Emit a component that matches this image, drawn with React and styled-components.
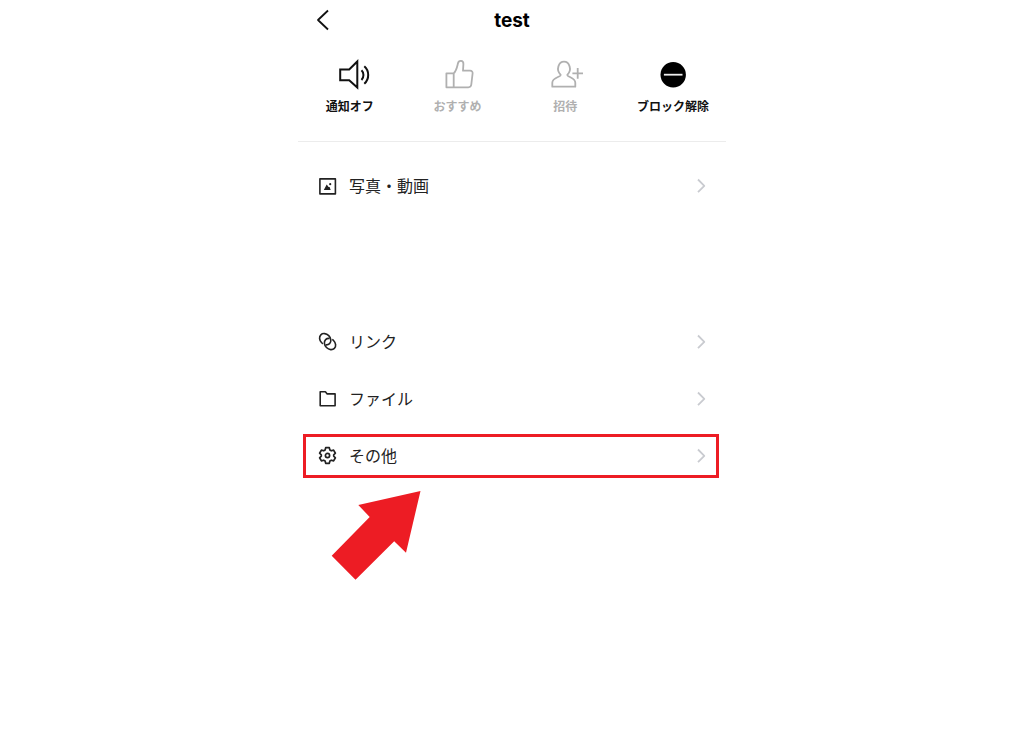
import React from 'react';
import styled, { createGlobalStyle } from 'styled-components';

const GlobalStyle = createGlobalStyle`
  * { box-sizing: border-box; }
  body {
    margin: 0;
    background: #fff;
    color: #111;
    font-family: Inter, "Noto Sans CJK JP", sans-serif;
  }
`;

const Screen = styled.main`
  max-width: 428px;
  margin: 0 auto;
`;

const Header = styled.header`
  display: grid;
  grid-template-columns: 48px 1fr 48px;
  align-items: center;
  height: 40px;
  padding-top: 2px;
`;

const IconButton = styled.button`
  display: flex;
  justify-content: center;
  padding: 0;
  border: 0;
  background: none;
  color: inherit;
  cursor: pointer;
`;

const Title = styled.h1`
  margin: 0;
  text-align: center;
  font-size: 19px;
  line-height: 24px;
  font-weight: 700;
  color: #000;
`;

const Actions = styled.nav`
  display: grid;
  grid-template-columns: repeat(4, 1fr);
  margin: 0 -1px 0 -2px;
  padding: 16px 0 24px;
`;

const Action = styled.button`
  display: flex;
  flex-direction: column;
  align-items: center;
  gap: 5px;
  padding: 0;
  border: 0;
  background: none;
  font-family: inherit;
  font-size: 12px;
  line-height: 20px;
  font-weight: 700;
  white-space: nowrap;
  color: ${(p) => (p.disabled ? '#b0b0b0' : '#111')};
`;

const Divider = styled.hr`
  height: 1px;
  margin: 0;
  border: 0;
  background: #ececec;
`;

const Menu = styled.ul`
  display: flex;
  flex-direction: column;
  gap: 13px;
  margin: 0;
  padding: ${(p) => (p.$spaced ? '112px' : '22px')} 7px 0 5px;
  list-style: none;
`;

const Row = styled.a`
  display: flex;
  align-items: center;
  gap: 11px;
  height: 44px;
  padding: 0 9px 0 12px;
  border: 3px solid ${(p) => (p.$highlighted ? '#ed1c24' : 'transparent')};
  color: #222;
  font-size: 16px;
  line-height: 24px;
  text-decoration: none;
`;

const RowLabel = styled.span`
  flex: 1;
`;

const Line = styled.svg`
  display: block;
  flex: none;
  fill: none;
  stroke: ${(p) => p.$color || 'currentColor'};
  stroke-width: ${(p) => p.$weight || 1.8};
  stroke-linejoin: round;
`;

const Pointer = styled.svg`
  display: block;
  margin: 12px 0 0 33px;
  fill: #ed1c24;
`;

const BackIcon = () => (
  <Line width="24" height="24" viewBox="0 1 24 24">
    <path d="M18 2.5 8 12l10 9.5" />
  </Line>
);

const SpeakerIcon = () => (
  <Line width="40" height="36" viewBox="0 0 40 36" $weight={2}>
    <path d="M10.2 13.5h9l8.1-8v26l-8.1-7.3h-9z" strokeLinejoin="miter" />
    <path d="M31.5 14.2c2.6 2.5 2.6 7.2 0 9.8M34.3 10.3c5.2 4.5 5.2 13 0 17.5" />
  </Line>
);

const ThumbIcon = () => (
  <Line width="40" height="36" viewBox="0 0 40 36">
    <path d="M8.4 17.3h7.3v14H8.4zM15.7 17.3c2.8-2.7 3.3-6 4.2-9.8.9-3.8 5.6-3.3 5.5.4L25 14.7h7.1c1.8 0 2.7 1.2 2.5 2.8l-1.3 11c-.2 1.8-1.2 2.8-3 2.8H15.7z" />
  </Line>
);

const InviteIcon = () => (
  <Line width="40" height="36" viewBox="-1 0 40 36">
    <path d="M14.7 18.8c-5.2-5-2-13.1 3.3-13.1s8.5 8.1 3.3 13.1c-.5 2.3 8 2.5 8 8v3.9h-23v-3.9c0-5.5 8.9-5.7 8.4-8z" />
    <path d="M31.7 12v10.7M26.4 17.3H37" />
  </Line>
);

const BlockIcon = () => (
  <Line width="40" height="36" viewBox="0 0 40 36">
    <circle cx="20.2" cy="18.7" r="12.7" fill="#000" stroke="none" />
    <path d="M10.9 18.7h18.6" stroke="#eee" />
  </Line>
);

const PhotoIcon = () => (
  <Line width="20" height="20" viewBox="0 0 20 20" $weight={1.6}>
    <rect x="1.9" y="2.9" width="15.5" height="15" />
    <path d="m5.8 13.9 2.9-5.3 1.9 2.3 1 .2 1.1 2.8z" fill="currentColor" stroke="none" />
    <circle cx="12.2" cy="8.2" r="1.1" fill="currentColor" stroke="none" />
  </Line>
);

const LinkIcon = () => (
  <Line width="20" height="20" viewBox="0 1 20 20" $weight={1.6}>
    <ellipse rx="6.2" ry="5" pathLength="100" strokeDasharray="12.2 8 79.8 0" transform="translate(7.2 8.2) rotate(45)" />
    <ellipse rx="6.2" ry="5" pathLength="100" strokeDasharray="62.2 8 29.8 0" transform="translate(12 13) rotate(45)" />
  </Line>
);

const FolderIcon = () => (
  <Line width="20" height="20" viewBox="0 1 20 20" $weight={1.6}>
    <path d="M2.2 3.8h5.2l1.8 2.1h7.9v11.8H2.2z" />
  </Line>
);

const GearIcon = () => (
  <Line width="20" height="20" viewBox="0 1 20 20" $weight={1.7}>
    <path d="M7.700 2.700h3.600l.6 2.300 1.400.8 2.300-.7 1.800 3.100-1.700 1.600v1.400l1.700 1.600-1.800 3.100-2.300-.7-1.400.8-.6 2.300H7.700L7.100 16l-1.400-.8-2.300.7-1.800-3.100 1.700-1.600V9.800L1.600 8.200l1.800-3.100 2.300.7L7.100 5z" />
    <circle cx="9.5" cy="10.5" r="2.1" />
  </Line>
);

const Chevron = () => (
  <Line width="12" height="16" viewBox="0 0 12 16" $color="#c9cbd0">
    <path d="m3 1.500 6.300 6.300L3 14.100" />
  </Line>
);

const actions = [
  { label: '通知オフ', Icon: SpeakerIcon },
  { label: 'おすすめ', Icon: ThumbIcon, disabled: true },
  { label: '招待', Icon: InviteIcon, disabled: true },
  { label: 'ブロック解除', Icon: BlockIcon },
];

const MenuItem = ({ label, Icon, highlighted }) => (
  <li>
    <Row href="#" $highlighted={highlighted}>
      <Icon />
      <RowLabel>{label}</RowLabel>
      <Chevron />
    </Row>
  </li>
);

export default function App() {
  return (
    <>
      <GlobalStyle />
      <Screen lang="ja">
        <Header>
          <IconButton type="button" aria-label="戻る">
            <BackIcon />
          </IconButton>
          <Title>test</Title>
        </Header>
        <Actions>
          {actions.map(({ label, Icon, disabled }) => (
            <Action key={label} type="button" disabled={disabled}>
              <Icon />
              {label}
            </Action>
          ))}
        </Actions>
        <Divider />
        <Menu>
          <MenuItem label="写真・動画" Icon={PhotoIcon} />
        </Menu>
        <Menu $spaced>
          <MenuItem label="リンク" Icon={LinkIcon} />
          <MenuItem label="ファイル" Icon={FolderIcon} />
          <MenuItem label="その他" Icon={GearIcon} highlighted />
        </Menu>
        <Pointer width="90" height="90" viewBox="0 0 90 90" aria-hidden="true">
          <path d="M89.5 1 27.3 15l11.4 12L.7 65.800l23.800 23.900 38.700-38.500L75 62.800z" />
        </Pointer>
      </Screen>
    </>
  );
}
